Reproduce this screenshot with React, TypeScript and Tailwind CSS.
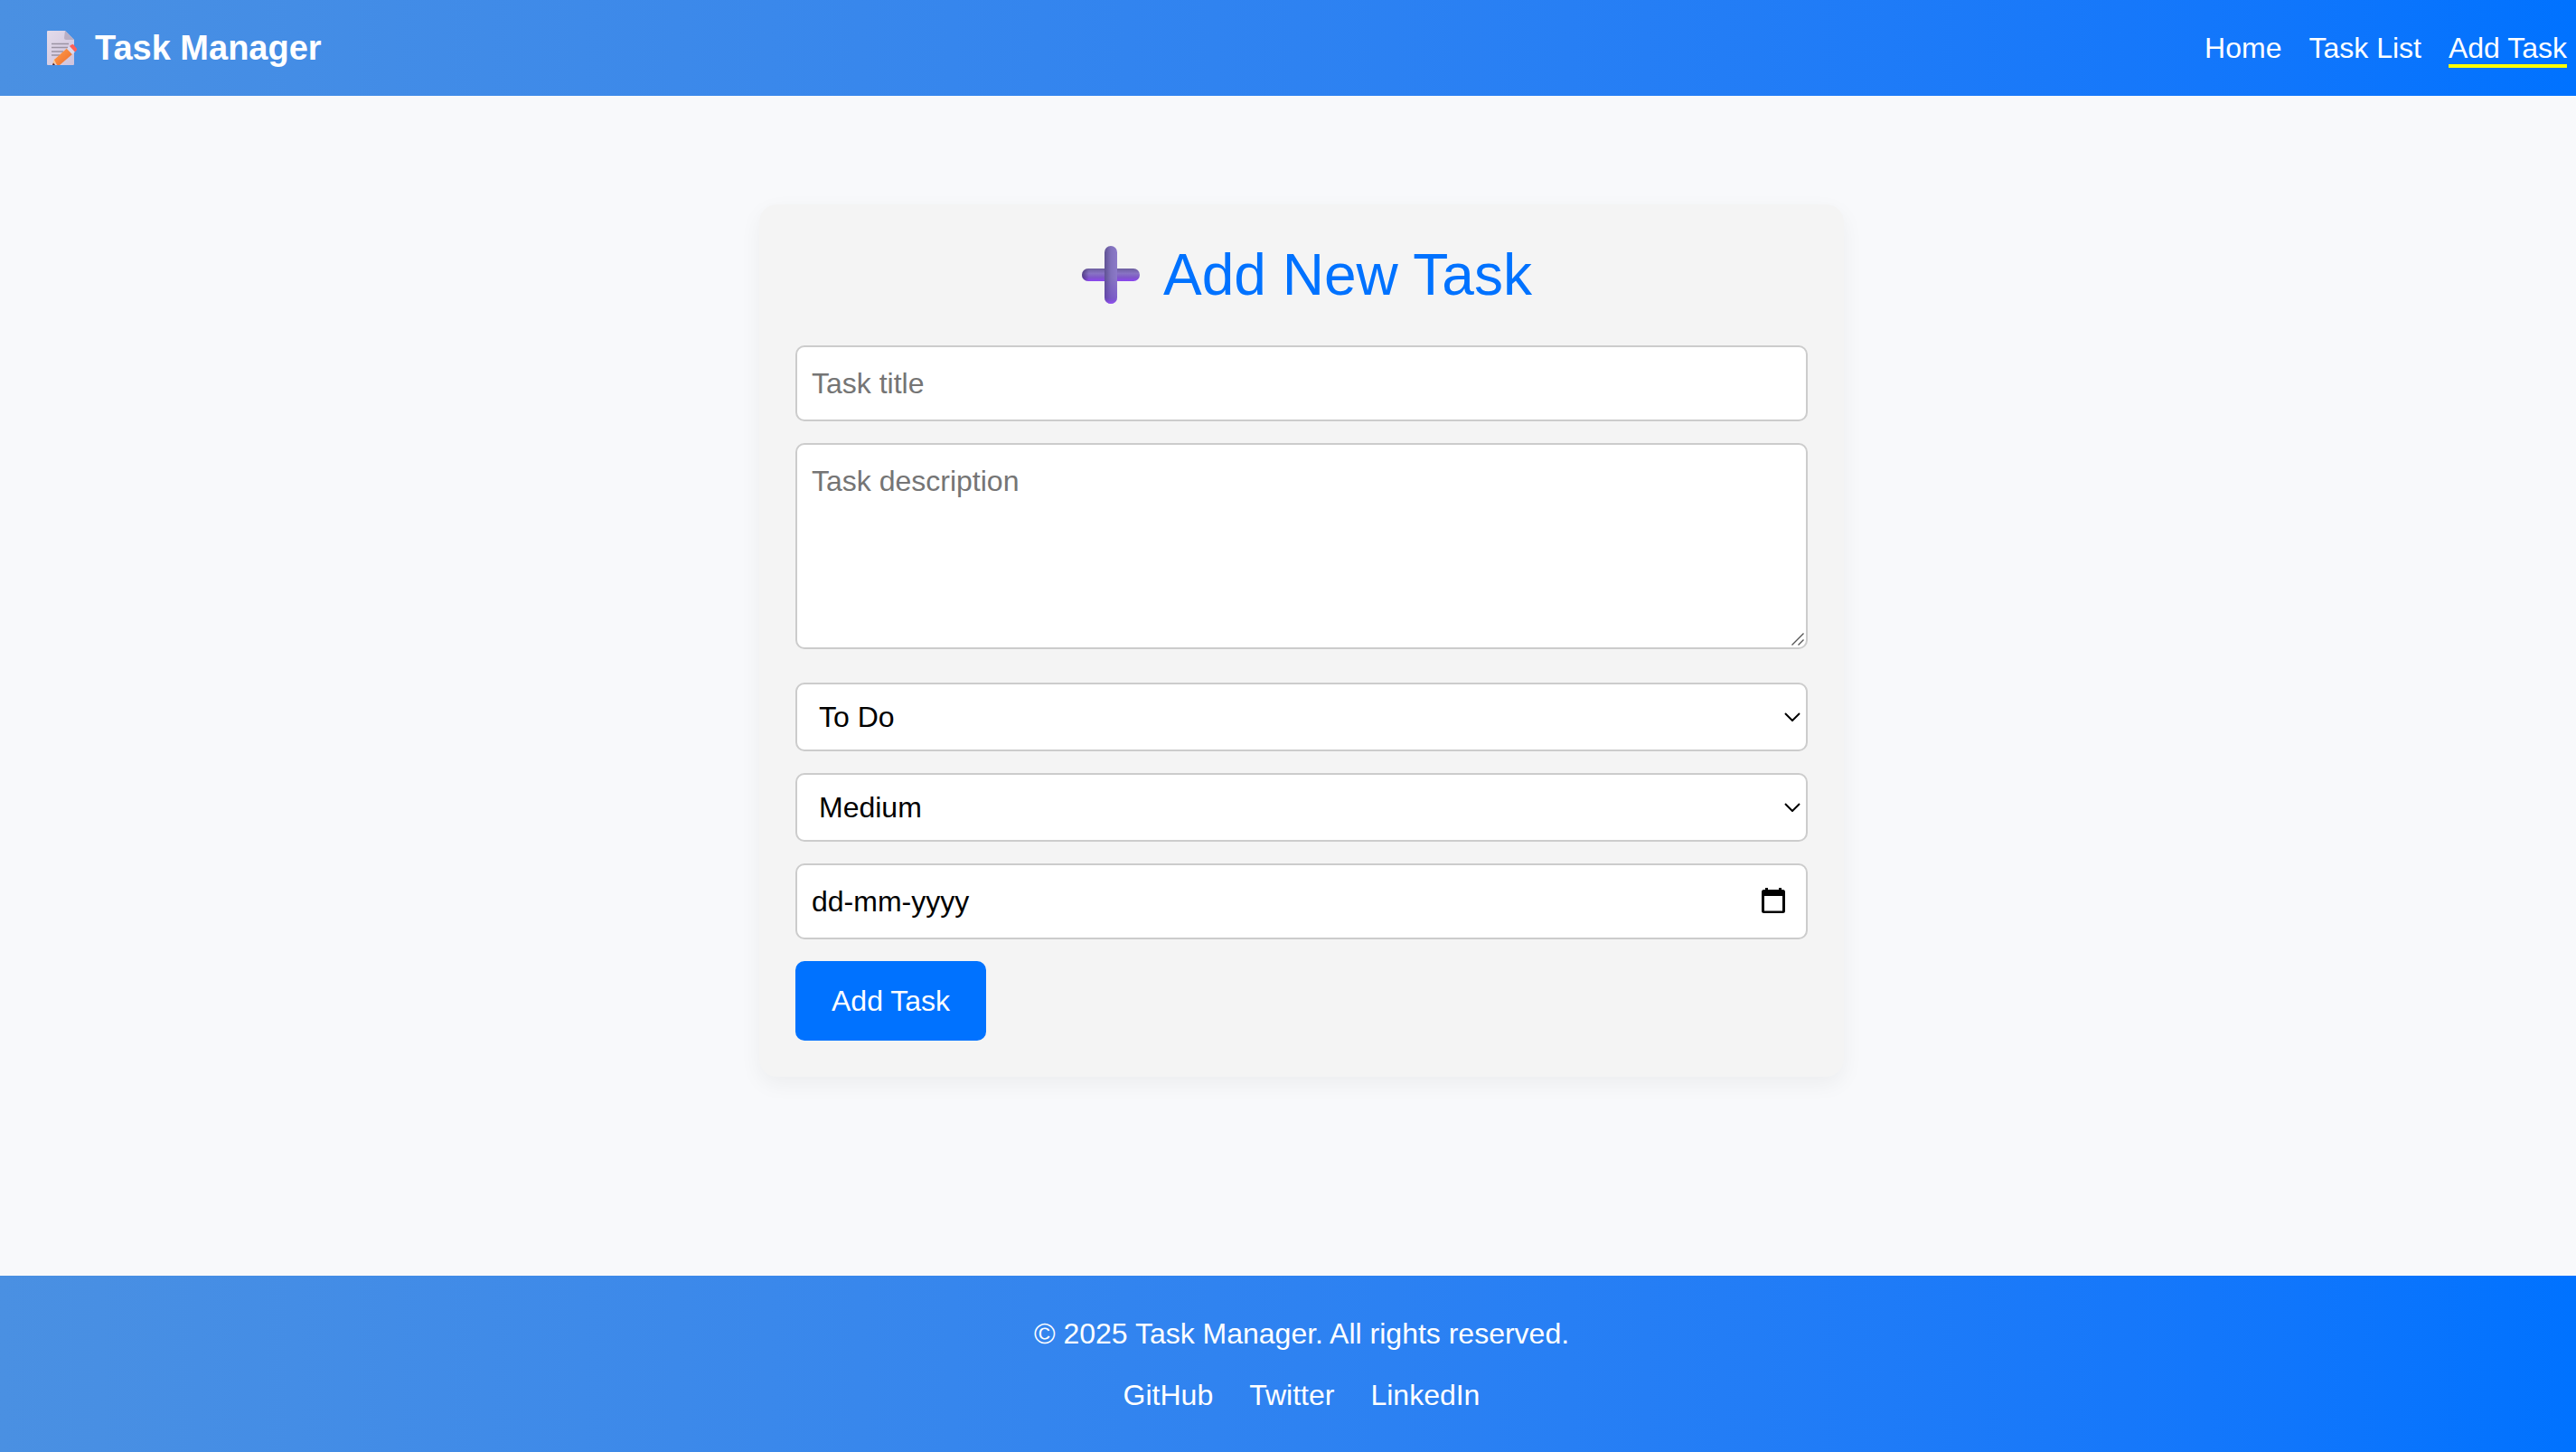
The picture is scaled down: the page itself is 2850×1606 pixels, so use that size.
import React from 'react';

const FIELD =
  'block w-full rounded-[10px] border-2 border-[#cccccc] bg-white text-[32px] leading-9 text-black outline-none';

function MemoIcon() {
  return (
    <svg viewBox="0 0 34 38" className="h-[38px] w-[34px] shrink-0" aria-hidden="true">
      <defs>
        <linearGradient id="sheet" x1="0" y1="0" x2="1" y2="1">
          <stop offset="0" stopColor="#e3dbea" />
          <stop offset="1" stopColor="#cfc3dc" />
        </linearGradient>
        <linearGradient id="pencil" x1="0" y1="0" x2="1" y2="1">
          <stop offset="0" stopColor="#ffa04a" />
          <stop offset="1" stopColor="#ee6a2c" />
        </linearGradient>
      </defs>
      <path d="M0 1Q0 0 1 0H20L30 10V37Q30 38 29 38H1Q0 38 0 37Z" fill="url(#sheet)" />
      <path d="M20 0L30 10H21Q19 10 19 8Z" fill="#b9aec4" />
      <path d="M5 14.500H24M5 18.500H23M5 23H18M5 27H14" stroke="#9b93a3" strokeWidth="1.300" />
      <path d="M6 37L8 31L12 36Z" fill="#f7c79b" />
      <path d="M6 38L7 35.500L9 38Z" fill="#4a2233" />
      <path d="M8 32L22 19.500L28 26L14 38H11Z" fill="url(#pencil)" />
      <path d="M22 20L25 17L31 23.500L28 26Z" fill="#dcd9ee" />
      <path d="M25 17L27 15.500Q28.500 14.500 29.500 15.500L33 20Q33.500 21 32.500 22L31 23.500Z" fill="#ff5f57" />
    </svg>
  );
}

function PlusIcon() {
  return (
    <svg viewBox="0 0 64 64" className="h-16 w-16 shrink-0" aria-hidden="true">
      <defs>
        <linearGradient id="barH" x1="0" y1="0" x2="0" y2="1">
          <stop offset="0" stopColor="#6d5f9f" />
          <stop offset="0.400" stopColor="#8873c4" />
          <stop offset="0.700" stopColor="#7f57c8" />
          <stop offset="1" stopColor="#8b45ef" />
        </linearGradient>
        <linearGradient id="barEnd" x1="0" y1="0" x2="1" y2="0">
          <stop offset="0" stopColor="#3d2a6b" stopOpacity="0.700" />
          <stop offset="0.120" stopColor="#3d2a6b" stopOpacity="0" />
        </linearGradient>
        <linearGradient id="barV" x1="0" y1="0" x2="1" y2="0">
          <stop offset="0" stopColor="#5f5193" />
          <stop offset="0.500" stopColor="#8070bb" />
          <stop offset="1" stopColor="#8c7ac9" />
        </linearGradient>
        <linearGradient id="barGlow" x1="0" y1="0" x2="0" y2="1">
          <stop offset="0.550" stopColor="#6a2fd0" stopOpacity="0" />
          <stop offset="0.900" stopColor="#6a2fd0" stopOpacity="0.350" />
          <stop offset="1" stopColor="#9a4dff" stopOpacity="0.900" />
        </linearGradient>
      </defs>
      <rect x="0" y="25" width="64" height="14" rx="7" fill="url(#barH)" />
      <rect x="0" y="25" width="64" height="14" rx="7" fill="url(#barEnd)" />
      <rect x="25" y="0" width="14" height="64" rx="7" fill="url(#barV)" />
      <rect x="25" y="0" width="14" height="64" rx="7" fill="url(#barGlow)" />
    </svg>
  );
}

function Select({ label, options, value }: { label: string; options: string[]; value: string }) {
  return (
    <div className="relative mb-6">
      <select aria-label={label} defaultValue={value} className={`${FIELD} h-[76px] appearance-none pr-12 pl-6`}>
        {options.map((option) => (
          <option key={option}>{option}</option>
        ))}
      </select>
      <svg
        viewBox="0 0 18 10"
        className="pointer-events-none absolute top-[33px] right-2 h-[10px] w-[18px]"
        fill="none"
        stroke="#000"
        strokeWidth="2"
        aria-hidden="true"
      >
        <path d="M1 1L9 9L17 1" />
      </svg>
    </div>
  );
}

export default function App() {
  return (
    <div className="flex min-h-screen flex-col bg-[#f8f9fb] font-['Liberation_Sans',Arial,sans-serif] text-[32px] leading-9">
      <header className="flex h-[106px] items-center justify-between bg-linear-90 from-[#4a90e2] to-[#0072ff] pr-[10px] pl-[52px] text-white">
        <div className="flex items-center gap-[19px] text-[38px] leading-11 font-bold">
          <MemoIcon />
          <span>Task Manager</span>
        </div>
        <nav className="flex gap-[30px] pt-1">
          <a href="#home" className="border-b-4 border-transparent">Home</a>
          <a href="#tasks" className="border-b-4 border-transparent">Task List</a>
          <a href="#add" aria-current="page" className="border-b-4 border-[#ffff00]">Add Task</a>
        </nav>
      </header>

      <main className="grow pt-[120px] pb-20 pl-[30px]">
        <section className="mx-auto w-full max-w-[1200px] rounded-[20px] bg-[#f4f4f4] p-10 shadow-[0_8px_24px_rgba(0,0,0,0.05)]">
          <h1 className="mb-10 flex items-center justify-center gap-[26px] pl-3 text-[64px] leading-[76px] text-[#0072ff]">
            <PlusIcon />
            <span>Add New Task</span>
          </h1>
          <form onSubmit={(event) => event.preventDefault()}>
            <input
              type="text"
              aria-label="Task title"
              placeholder="Task title"
              className={`${FIELD} mb-6 h-[84px] px-4 placeholder:text-[#757575]`}
            />
            <div className="relative mb-[37px]">
              <textarea
                aria-label="Task description"
                placeholder="Task description"
                className={`${FIELD} h-[228px] resize-none px-4 py-[22px] placeholder:text-[#757575]`}
              />
              <svg
                viewBox="0 0 14 14"
                className="pointer-events-none absolute right-1 bottom-1 h-[14px] w-[14px]"
                stroke="#555"
                strokeWidth="1.400"
                aria-hidden="true"
              >
                <path d="M0.500 13.500L13.500 0.500M7.500 13.500L13.500 7.500" />
              </svg>
            </div>
            <Select label="Status" value="To Do" options={['To Do', 'In Progress', 'Done']} />
            <Select label="Priority" value="Medium" options={['Low', 'Medium', 'High']} />
            <div className="relative mb-6">
              <input
                type="text"
                aria-label="Due date"
                placeholder="dd-mm-yyyy"
                className={`${FIELD} h-[84px] px-4 placeholder:text-black`}
              />
              <button type="button" aria-label="Open calendar" className="absolute top-[27px] right-[25px]">
                <svg viewBox="0 0 26 28" className="h-7 w-[26px]" aria-hidden="true">
                  <path
                    fillRule="evenodd"
                    d="M4 0H7V2H19V0H22V2H23.500Q26 2 26 4.500V25.500Q26 28 23.500 28H2.500Q0 28 0 25.500V4.500Q0 2 2.500 2H4ZM3 9V25.500H23V9Z"
                  />
                </svg>
              </button>
            </div>
            <button type="submit" className="h-[88px] rounded-[10px] bg-[#0072ff] px-10 text-white">
              Add Task
            </button>
          </form>
        </section>
      </main>

      <footer className="flex h-[195px] flex-col items-center gap-8 bg-linear-90 from-[#4a90e2] to-[#0072ff] pt-[46px] pl-[30px] text-white">
        <p>© 2025 Task Manager. All rights reserved.</p>
        <nav className="flex gap-10">
          <a href="#github">GitHub</a>
          <a href="#twitter">Twitter</a>
          <a href="#linkedin">LinkedIn</a>
        </nav>
      </footer>
    </div>
  );
}
